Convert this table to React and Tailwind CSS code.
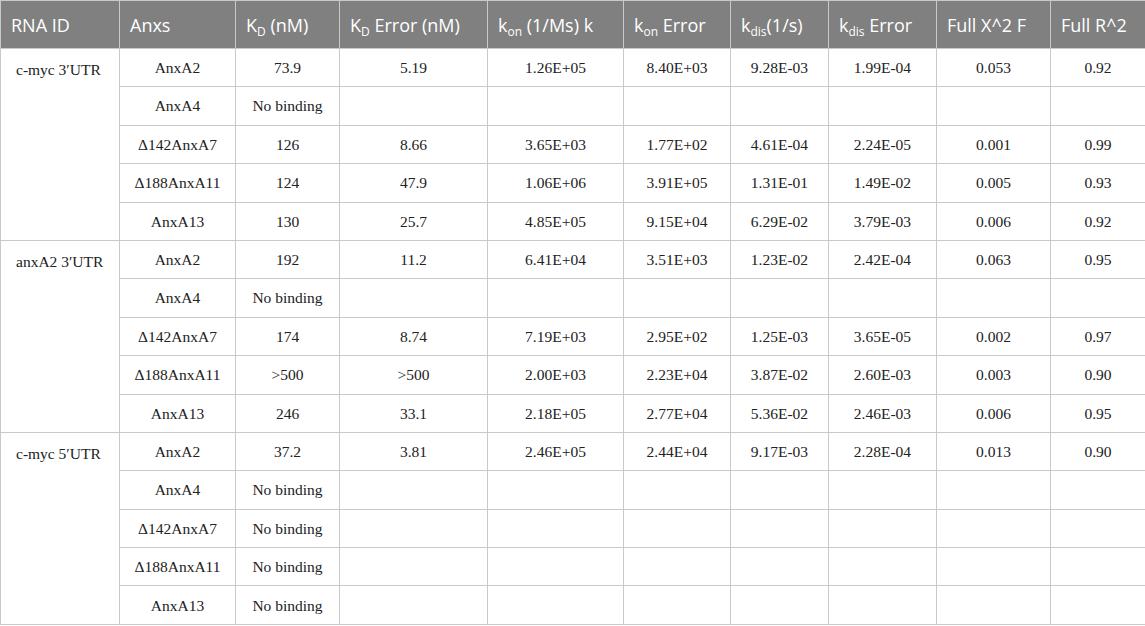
import React from 'react';

const widths = [119, 116, 104, 148, 136, 107, 98, 108, 114, 95];

const groups = [
  {
    id: 'c-myc 3′UTR',
    rows: [
      ['AnxA2', '73.9', '5.19', '1.26E+05', '8.40E+03', '9.28E-03', '1.99E-04', '0.053', '0.92'],
      ['AnxA4', 'No binding'],
      ['Δ142AnxA7', '126', '8.66', '3.65E+03', '1.77E+02', '4.61E-04', '2.24E-05', '0.001', '0.99'],
      ['Δ188AnxA11', '124', '47.9', '1.06E+06', '3.91E+05', '1.31E-01', '1.49E-02', '0.005', '0.93'],
      ['AnxA13', '130', '25.7', '4.85E+05', '9.15E+04', '6.29E-02', '3.79E-03', '0.006', '0.92'],
    ],
  },
  {
    id: 'anxA2 3′UTR',
    rows: [
      ['AnxA2', '192', '11.2', '6.41E+04', '3.51E+03', '1.23E-02', '2.42E-04', '0.063', '0.95'],
      ['AnxA4', 'No binding'],
      ['Δ142AnxA7', '174', '8.74', '7.19E+03', '2.95E+02', '1.25E-03', '3.65E-05', '0.002', '0.97'],
      ['Δ188AnxA11', '>500', '>500', '2.00E+03', '2.23E+04', '3.87E-02', '2.60E-03', '0.003', '0.90'],
      ['AnxA13', '246', '33.1', '2.18E+05', '2.77E+04', '5.36E-02', '2.46E-03', '0.006', '0.95'],
    ],
  },
  {
    id: 'c-myc 5′UTR',
    rows: [
      ['AnxA2', '37.2', '3.81', '2.46E+05', '2.44E+04', '9.17E-03', '2.28E-04', '0.013', '0.90'],
      ['AnxA4', 'No binding'],
      ['Δ142AnxA7', 'No binding'],
      ['Δ188AnxA11', 'No binding'],
      ['AnxA13', 'No binding'],
    ],
  },
];

function Sub({ children }) {
  return <sub className="text-[12px] relative top-[1px] align-[-3px]">{children}</sub>;
}

const th = 'border border-[#c9c9c9] text-left font-normal px-[10px] pt-[2px] whitespace-nowrap';
const td = 'border border-[#c9c9c9] text-center px-1 whitespace-nowrap';

export default function App() {
  return (
    <div className="bg-white w-[1145px] h-[626px] overflow-hidden">
      <table className="border-collapse table-fixed w-[1145px]">
        <colgroup>
          {widths.map((w, i) => (
            <col key={i} style={{ width: w }} />
          ))}
        </colgroup>
        <thead>
          <tr className="h-[48px] bg-[#808080] text-white text-[18px] font-['Open_Sans',sans-serif]">
            <th className={th}>RNA ID</th>
            <th className={th}>Anxs</th>
            <th className={th}>K<Sub>D</Sub> (nM)</th>
            <th className={th}>K<Sub>D</Sub> Error (nM)</th>
            <th className={th}>k<Sub>on</Sub> (1/Ms) k</th>
            <th className={th}>k<Sub>on</Sub> Error</th>
            <th className={th}>k<Sub>dis</Sub>(1/s)</th>
            <th className={th}>k<Sub>dis</Sub> Error</th>
            <th className={th}>Full X^2 F</th>
            <th className={th}>Full R^2</th>
          </tr>
        </thead>
        <tbody className="text-[15.5px] text-[#222] font-['Liberation_Serif',serif]">
          {groups.map((g) =>
            g.rows.map((r, i) => (
              <tr key={g.id + i} className="h-[38.4px]">
                {i === 0 && (
                  <td rowSpan={5} className="border border-[#c9c9c9] align-top text-left pl-[15px] pt-[9px] whitespace-nowrap">
                    {g.id}
                  </td>
                )}
                {Array.from({ length: 9 }).map((_, j) => (
                  <td key={j} className={td}>
                    {r[j] || ''}
                  </td>
                ))}
              </tr>
            ))
          )}
        </tbody>
      </table>
    </div>
  );
}
